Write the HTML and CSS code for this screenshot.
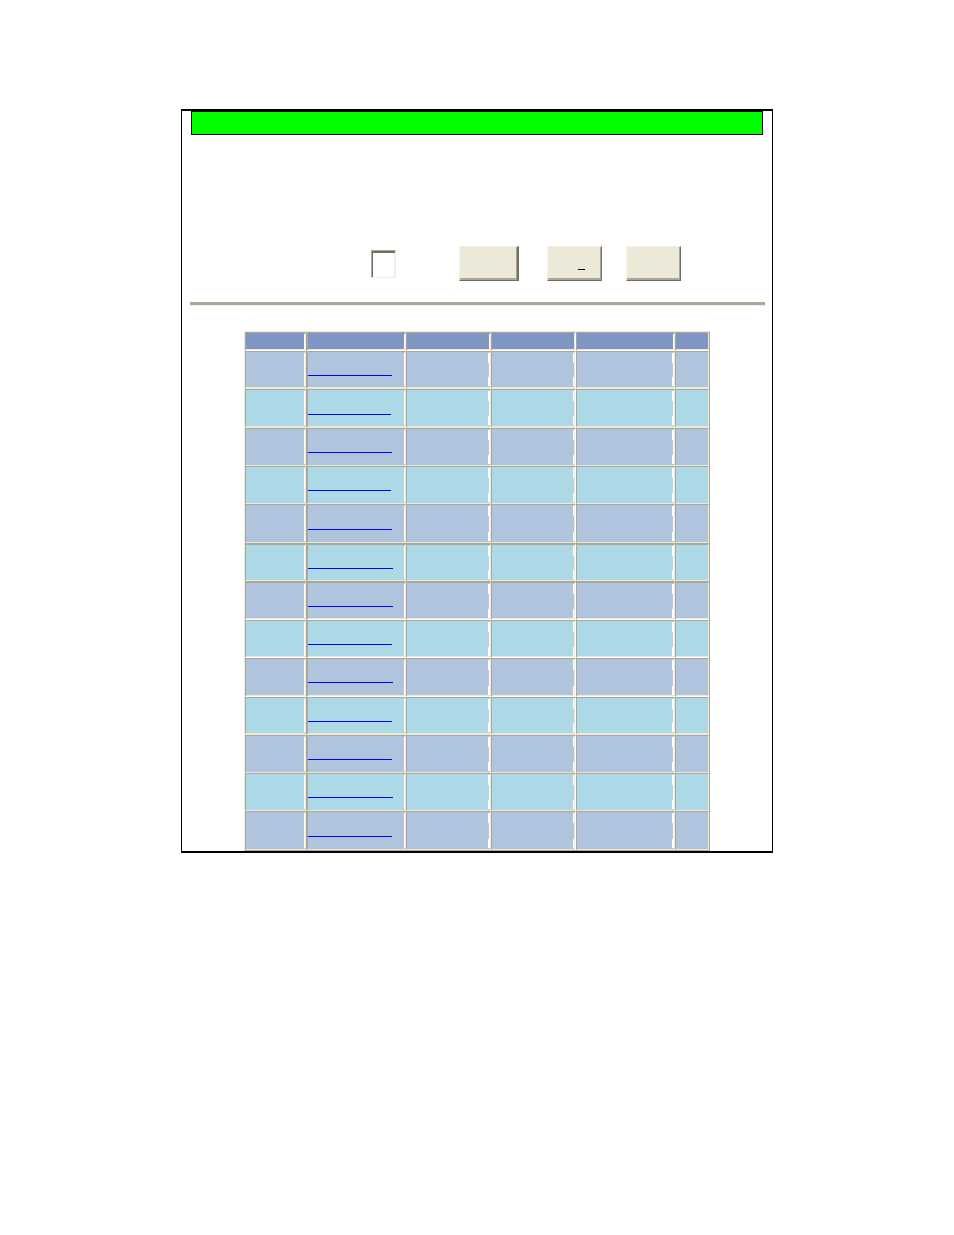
FILE: index.html
```
<!DOCTYPE html>
<html lang="en">

<head>
    <meta charset="UTF-8">
    <meta name="viewport" content="width=device-width, initial-scale=1.0">
    <title>Records</title>
    <link rel="stylesheet" href="styles.css">
</head>

<body>

    <div class="frame">
        <div class="title-bar"></div>

        <form class="toolbar">
            <input type="text" class="code" aria-label="Code">
            <button type="button" class="btn wide" aria-label="Find"></button>
            <button type="button" class="btn" aria-label="Add"><span class="key"></span></button>
            <button type="button" class="btn" aria-label="Reset"></button>
        </form>

        <hr class="rule">

        <table class="grid">
            <thead>
                <tr><th></th><th></th><th></th><th></th><th></th><th></th></tr>
            </thead>
            <tbody>
                <tr class="thick"><td></td><td><a href="#" aria-label="Record 1"></a></td><td></td><td></td><td></td><td></td></tr>
                <tr class="tall low thick"><td></td><td><a href="#" class="short" aria-label="Record 2"></a></td><td></td><td></td><td></td><td></td></tr>
                <tr><td></td><td><a href="#" aria-label="Record 3"></a></td><td></td><td></td><td></td><td></td></tr>
                <tr><td></td><td><a href="#" class="short" aria-label="Record 4"></a></td><td></td><td></td><td></td><td></td></tr>
                <tr class="tall low shade"><td></td><td><a href="#" aria-label="Record 5"></a></td><td></td><td></td><td></td><td></td></tr>
                <tr class="shade"><td></td><td><a href="#" class="long" aria-label="Record 6"></a></td><td></td><td></td><td></td><td></td></tr>
                <tr class="tall lit"><td></td><td><a href="#" class="long" aria-label="Record 7"></a></td><td></td><td></td><td></td><td></td></tr>
                <tr class="lit"><td></td><td><a href="#" aria-label="Record 8"></a></td><td></td><td></td><td></td><td></td></tr>
                <tr class="tall lit"><td></td><td><a href="#" class="long" aria-label="Record 9"></a></td><td></td><td></td><td></td><td></td></tr>
                <tr class="thick"><td></td><td><a href="#" aria-label="Record 10"></a></td><td></td><td></td><td></td><td></td></tr>
                <tr><td></td><td><a href="#" aria-label="Record 11"></a></td><td></td><td></td><td></td><td></td></tr>
                <tr><td></td><td><a href="#" class="long" aria-label="Record 12"></a></td><td></td><td></td><td></td><td></td></tr>
                <tr class="tall low"><td></td><td><a href="#" aria-label="Record 13"></a></td><td></td><td></td><td></td><td></td></tr>
            </tbody>
        </table>
    </div>

</body>

</html>
```
FILE: styles.css
```
* {
    box-sizing: border-box;
}

body {
    font-family: "Liberation Sans", Arial, sans-serif;
    background-color: #fff;
    margin: 0;
    padding: 109px 181px;
}

.frame {
    border: 1px solid #000;
    border-top-width: 2px;
    border-bottom-width: 2px;
}

.title-bar {
    height: 24px;
    margin: 0 9px;
    background-color: #00ff00;
    border: 1px solid #000;
}

.toolbar {
    display: flex;
    align-items: center;
    padding: 111px 0 21px 189px;
}

.code {
    width: 25px;
    height: 28px;
    margin: 0 63px 0 0;
    padding: 0;
    border: 1px solid;
    border-color: #aca899 #f1efe2 #f1efe2 #aca899;
    box-shadow: inset 1px 2px 0 #716f64, inset -1px 0 0 #f1efe2;
}

.btn {
    width: 55px;
    height: 35px;
    margin: 0 24px 0 0;
    padding: 0;
    background-color: #ece9d8;
    border: 1px solid;
    border-color: #f1efe2 #716f64 #716f64 #f1efe2;
    box-shadow: inset -1px -2px 0 #aca899, inset 1px 0 0 #f1efe2;
}

.btn.wide {
    width: 60px;
    margin-right: 28px;
    border-right-width: 2px;
}

/* access key underline */
.key {
    display: block;
    width: 7px;
    margin: 12px 0 0 30px;
    border-bottom: 1px solid #000;
}

.rule {
    height: 4px;
    margin: 0 7px 25px 8px;
    background-color: #aca899;
    border: 0;
    border-bottom: 1px solid #f1efe2;
}

.grid {
    width: 466px;
    margin: 0 auto;
    table-layout: fixed;
    border-collapse: separate;
    border-spacing: 0;
    border: 1px solid;
    border-color: #ece9d8 #aca899 #aca899 #ece9d8;
}

.grid th,
.grid td {
    height: 38px;
    padding: 0;
    vertical-align: top;
    border: 1px solid;
    border-color: #aca899 #ece9d8 #ece9d8 #aca899;
    background-repeat: no-repeat;
    background-origin: padding-box;
    background-image: linear-gradient(#fff, #fff);
    background-size: 1px calc(100% - 2px);
    background-position: right center;
}

.grid th {
    height: 19px;
    background-color: #7f96c4;
    border-bottom-color: #fff;
    box-shadow: inset 0 -1px 0 #ece9d8;
}

.grid td {
    background-color: #b0c4de;
}

.grid tr:nth-child(even) td {
    background-color: #add8e6;
}

/* column widths */
.grid th:nth-child(1) { width: 61px; }
.grid th:nth-child(2) { width: 100px; }
.grid th:nth-child(3) { width: 85px; }
.grid th:nth-child(4) { width: 85px; }
.grid th:nth-child(5) { width: 99px; }
.grid th:nth-child(6) { width: 34px; }

.grid th:nth-child(2),
.grid td:nth-child(2) {
    border-left-width: 2px;
}

/* highlight is wider at the ends of the cell */
.grid td:nth-child(3),
.grid td:nth-child(4),
.grid td:nth-child(5) {
    background-image: linear-gradient(#fff, #fff), linear-gradient(#fff 10px, transparent 10px, transparent calc(100% - 9px), #fff calc(100% - 9px));
    background-size: 1px calc(100% - 2px), 2px calc(100% - 2px);
}

.grid th:nth-child(4) {
    border-right-color: #fff;
    box-shadow: inset -1px -1px 0 #ece9d8;
}

.grid td:nth-child(4) {
    border-right-color: #fff;
    box-shadow: inset -1px 0 0 #ece9d8;
    background-image: linear-gradient(#fff 10px, transparent 10px, transparent calc(100% - 9px), #fff calc(100% - 9px));
    background-size: 2px calc(100% - 2px);
}

.grid th:nth-child(6),
.grid td:nth-child(6) {
    background-image: none;
}

/* row variants */
.grid .tall td {
    height: 39px;
}

.grid .thick td {
    border-bottom-width: 2px;
}

.grid .lit td {
    border-bottom-color: #fff;
    box-shadow: inset 0 -1px 0 #ece9d8;
}

.grid .lit td:nth-child(4) {
    box-shadow: inset -1px -1px 0 #ece9d8;
}

.grid .shade + tr td {
    border-top-width: 2px;
}

.grid a {
    display: block;
    width: 84px;
    height: 24px;
    border-bottom: 1px solid #0000ff;
}

.grid .low a {
    height: 25px;
}

.grid a.short {
    width: 83px;
}

.grid a.long {
    width: 85px;
}
```
